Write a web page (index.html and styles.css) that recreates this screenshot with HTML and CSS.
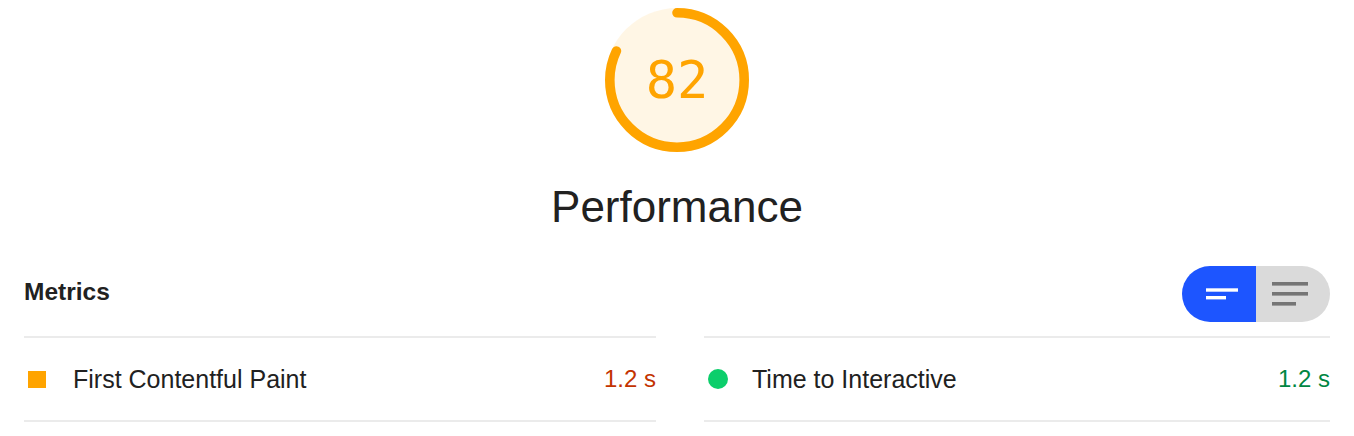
FILE: index.html
```html
<!DOCTYPE html>
<html lang="en">
<head>
  <meta charset="UTF-8">
  <meta name="viewport" content="width=device-width, initial-scale=1.0">
  <title>Performance</title>
  <link rel="stylesheet" href="styles.css">
</head>
<body>

  <div class="category-header">
    <svg class="gauge" viewBox="0 0 144 144" width="144" height="144">
      <circle class="gauge-base" cx="72" cy="72" r="72"></circle>
      <!-- 82% of 2*pi*67.2 = 346.24 -->
      <circle class="gauge-arc" cx="72" cy="72" r="67.2" stroke-dasharray="346.2 500" transform="rotate(-90 72 72)"></circle>
    </svg>
    <div class="gauge-percentage">82</div>
    <div class="gauge-label">Performance</div>
  </div>

  <div class="metrics">
    <div class="metrics-header">
      <h2>Metrics</h2>
      <div class="toggle">
        <span class="toggle-half active">
          <svg viewBox="0 0 74 56" width="74" height="56">
            <rect x="24" y="22.3" width="32" height="3.4" fill="#fff"></rect>
            <rect x="24" y="30" width="20" height="3.4" fill="#fff"></rect>
          </svg>
        </span>
        <span class="toggle-half">
          <svg viewBox="0 0 74 56" width="74" height="56">
            <rect x="16" y="16" width="36" height="3.6" fill="#757575"></rect>
            <rect x="16" y="26" width="36" height="3.6" fill="#757575"></rect>
            <rect x="16" y="36" width="24" height="3.6" fill="#757575"></rect>
          </svg>
        </span>
      </div>
    </div>

    <div class="metrics-grid">
      <div class="metric average">
        <span class="metric-icon"></span>
        <span class="metric-title">First Contentful Paint</span>
        <span class="metric-value">1.2 s</span>
      </div>
      <div class="metric pass">
        <span class="metric-icon"></span>
        <span class="metric-title">Time to Interactive</span>
        <span class="metric-value">1.2 s</span>
      </div>
    </div>
  </div>

</body>
</html>
```

FILE: styles.css
```css
body {
  margin: 0;
  font-family: "Liberation Sans", Arial, sans-serif;
  color: #212121;
  background: #fff;
}

.category-header {
  position: relative;
  padding-top: 8px;
  text-align: center;
}

.gauge {
  display: block;
  margin: 0 auto;
}

.gauge-base {
  fill: rgba(255, 164, 0, 0.1);
}

.gauge-arc {
  fill: none;
  stroke: #ffa400;
  stroke-width: 9.6;
  stroke-linecap: round;
}

.gauge-percentage {
  position: absolute;
  top: 8px;
  left: 0;
  right: 0;
  line-height: 144px;
  font-family: "DejaVu Sans Mono", monospace;
  font-size: 52px;
  color: #ffa400;
}

.gauge-label {
  margin-top: 28px;
  font-size: 44px;
  line-height: 53px;
}

.metrics {
  padding: 33px 24px 0;
}

.metrics-header {
  display: flex;
  justify-content: space-between;
  align-items: center;
  margin-bottom: 14px;
}

.metrics-header h2 {
  margin: 0 0 4px;
  font-size: 24.5px;
  font-weight: bold;
}

.toggle {
  display: flex;
  border-radius: 28px;
  overflow: hidden;
}

.toggle-half {
  display: block;
  width: 74px;
  height: 56px;
  background: #dadada;
}

.toggle-half svg {
  display: block;
}

.toggle-half.active {
  background: #1d55ff;
}

.metrics-grid {
  display: grid;
  grid-template-columns: 632px 1fr;
  column-gap: 48px;
}

.metric {
  display: flex;
  align-items: center;
  height: 82px;
  border-top: 2px solid #ebebeb;
  border-bottom: 2px solid #ebebeb;
  font-size: 24px;
}

.metric-icon {
  width: 18px;
  height: 17px;
  margin-left: 4px;
  margin-right: 27px;
}

.average .metric-icon {
  background: #ffa400;
}

.pass .metric-icon {
  width: 20px;
  height: 20px;
  margin-right: 24px;
  border-radius: 50%;
  background: #0cce6b;
}

.metric-title {
  flex: 1;
  font-size: 25px;
}

.average .metric-value {
  color: #c33300;
}

.pass .metric-value {
  color: #018642;
}
```
